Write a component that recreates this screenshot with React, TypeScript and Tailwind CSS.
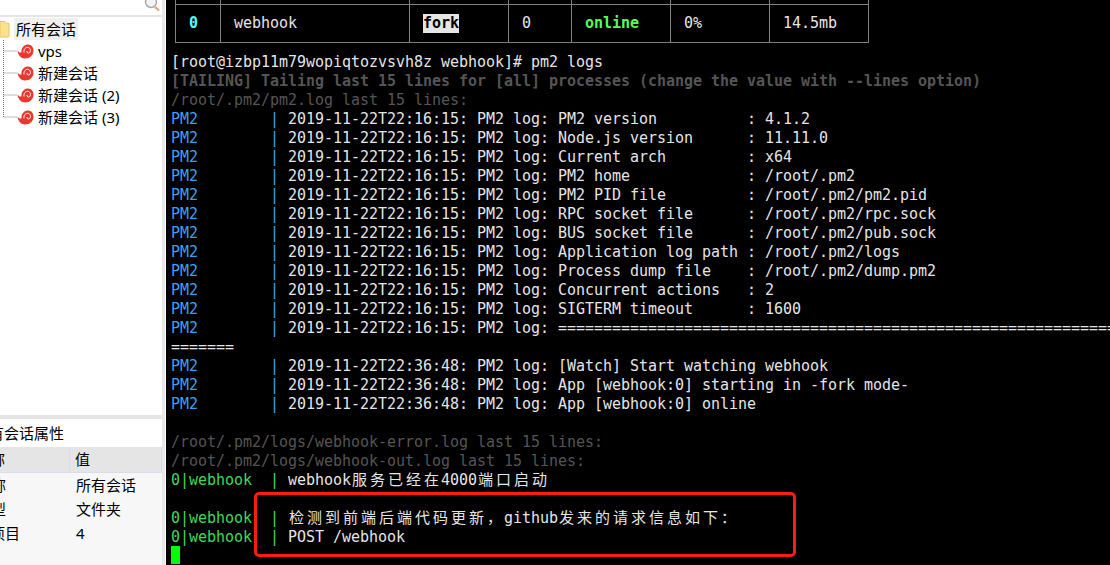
const cjk = '"Noto Sans","Noto Sans CJK SC",sans-serif';

function Spiral() {
  return (
    <svg width="17" height="15" viewBox="0 0 17 15" className="shrink-0">
      <path d="M0.5 6.5C2.5 9 4 9 4.5 8C4 3 8 0.5 11 0.5C14.5 0.5 16.5 3.5 16.5 6.5C16.5 11 13 14.5 8 14.5C4 14.5 1 11 0.5 6.5Z" fill="#e8392f" />
      <path d="M7 8.5C6.4 5 9 3 11 3.3C13.5 3.8 14.2 7 12.6 8.6C11.2 9.7 9.6 8.6 10 7" fill="none" stroke="#fff" strokeWidth="1" />
    </svg>
  );
}

function TreeRow({ label, last }: { label: string; last?: boolean }) {
  return (
    <div className="flex h-[22px] items-center">
      <svg width="17" height="22" viewBox="0 0 17 22" className="shrink-0">
        <path d={last ? "M3.5 0V11H17" : "M3.5 0V22M3.5 11H17"} fill="none" stroke="#777" strokeDasharray="1 1" />
      </svg>
      <Spiral />
      <span className="ml-[4px] text-[15px] text-black whitespace-pre">{label}</span>
    </div>
  );
}

function Sidebar() {
  return (
    <div className="flex h-full w-[166px] shrink-0 overflow-hidden bg-white" style={{ fontFamily: cjk }}>
      <div className="flex w-[162px] shrink-0 flex-col">
        <div className="flex h-[15px] justify-end overflow-hidden pr-[2px]">
          <svg width="16" height="15" viewBox="0 0 16 15" className="shrink-0">
            <circle cx="7" cy="2" r="5.5" fill="#f4f4f4" stroke="#a9a9a9" strokeWidth="1.5" />
            <path d="M11 7L15 10.5" stroke="#e0a070" strokeWidth="2" />
          </svg>
        </div>
        <div className="h-[2px] bg-[#e5e5e5]" />
        <div className="flex-1">
          <div className="flex h-[22px] items-center mt-[1px]">
            <svg width="14" height="17" viewBox="0 0 14 17" className="shrink-0">
              <path d="M0 0.5H5L7 2.5H9V16H0Z" fill="#fde08a" stroke="#e6c66a" />
            </svg>
            <span className="bg-[#f0f0f0] px-[2px] text-[15px] leading-[22px] text-black">所有会话</span>
          </div>
          <TreeRow label="vps" />
          <TreeRow label="新建会话" />
          <TreeRow label="新建会话 (2)" />
          <TreeRow label="新建会话 (3)" last />
        </div>
        <div className="h-[4px] bg-[#e5e5e5]" />
        <div className="flex h-[28px] items-center -ml-[26px] text-[15px] text-black whitespace-nowrap">所有会话属性</div>
        <div className="flex h-[26px] bg-[#e5e5e5] border-b border-r border-[#d9dee8] text-[15px] text-black">
          <div className="flex w-[70px] shrink-0 items-center justify-end border-r border-[#d9dee8] pr-[64px] whitespace-nowrap">名称</div>
          <div className="flex items-center pl-[5px]">值</div>
        </div>
        <div className="flex-none h-[92px] bg-[#f7f7f7] text-[15px] text-black">
          {[["名称", "所有会话"], ["类型", "文件夹"], ["包含项目", "4"]].map(([k, v]) => (
            <div key={k} className="flex h-[24px] items-center">
              <div className="flex w-[70px] shrink-0 justify-end whitespace-nowrap" style={{ paddingRight: k === "包含项目" ? 50 : 64 }}>{k}</div>
              <div className="pl-[6px]">{v}</div>
            </div>
          ))}
        </div>
      </div>
      <div className="w-[3px] shrink-0 bg-[#e8e8e8]" />
      <div className="w-[1px] shrink-0 bg-white" />
    </div>
  );
}

function Cell({ w, children, last }: { w: string; children?: React.ReactNode; last?: boolean }) {
  return (
    <div className={`flex shrink-0 items-center border-l border-[#808080] pl-[13px] ${w} ${last ? "border-r" : ""}`}>
      {children}
    </div>
  );
}

function Table() {
  const widths = ["w-[45px]", "w-[189px]", "w-[99px]", "w-[63px]", "w-[99px]", "w-[99px]", "w-[100px]"];
  return (
    <div className="ml-[9px] flex w-[694px] flex-col">
      <div className="flex h-[4px]">
        {widths.map((w, i) => <Cell key={i} w={w} last={i === 6} />)}
      </div>
      <div className="flex h-[39px] border-y border-[#808080] text-[#e5e5e5]">
        <Cell w="w-[45px]"><span className="font-bold text-[#5ff]">0</span></Cell>
        <Cell w="w-[189px]">webhook</Cell>
        <Cell w="w-[99px]"><span className="bg-[#e5e5e5] font-bold leading-[19px] text-black">fork</span></Cell>
        <Cell w="w-[63px]">0</Cell>
        <Cell w="w-[99px]"><span className="font-bold text-[#5f5]">online</span></Cell>
        <Cell w="w-[99px]">0%</Cell>
        <Cell w="w-[100px]" last>14.5mb</Cell>
      </div>
    </div>
  );
}

function Z({ t }: { t: string }) {
  return <span className="tracking-[3px] pl-[1px] -mr-[1px] text-[15px] leading-[0]" style={{ fontFamily: '"Noto Sans CJK SC",sans-serif' }}>{t}</span>;
}

function Pm2({ children }: { children: React.ReactNode }) {
  return (
    <div className="h-[19px] text-[#e5e5e5]">
      <span className="text-[#3aa0f5]">{"PM2        | "}</span>
      {"2019-11-22T22:"}
      {children}
    </div>
  );
}

const startup: [string, string][] = [
  ["PM2 version", "4.1.2"],
  ["Node.js version", "11.11.0"],
  ["Current arch", "x64"],
  ["PM2 home", "/root/.pm2"],
  ["PM2 PID file", "/root/.pm2/pm2.pid"],
  ["RPC socket file", "/root/.pm2/rpc.sock"],
  ["BUS socket file", "/root/.pm2/pub.sock"],
  ["Application log path", "/root/.pm2/logs"],
  ["Process dump file", "/root/.pm2/dump.pm2"],
  ["Concurrent actions", "2"],
  ["SIGTERM timeout", "1600"],
];

function Hook({ children }: { children: React.ReactNode }) {
  return (
    <div className="h-[19px] text-[#e5e5e5]">
      <span className="text-[#3fd85a]">{"0|webhook  | "}</span>
      {children}
    </div>
  );
}

function Terminal() {
  return (
    <div className="relative h-full flex-1 overflow-hidden bg-black text-[15px] leading-[19px] tracking-[-0.03px] whitespace-pre" style={{ fontFamily: '"DejaVu Sans Mono",monospace' }}>
      <Table />
      <div className="mt-[10px] pl-[5px]">
        <div className="h-[19px] text-[#e5e5e5]">[root@izbp11m79wopiqtozvsvh8z webhook]# pm2 logs</div>
        <div className="h-[19px] font-bold text-[#555]">[TAILING] Tailing last 15 lines for [all] processes (change the value with --lines option)</div>
        <div className="h-[19px] text-[#555]">/root/.pm2/pm2.log last 15 lines:</div>
        {startup.map(([k, v]) => (
          <Pm2 key={k}>{`16:15: PM2 log: ${k.padEnd(21)}: ${v}`}</Pm2>
        ))}
        <Pm2>{"16:15: PM2 log: ".concat("=".repeat(62))}</Pm2>
        <div className="h-[19px] text-[#e5e5e5]">=======</div>
        <Pm2>36:48: PM2 log: [Watch] Start watching webhook</Pm2>
        <Pm2>36:48: PM2 log: App [webhook:0] starting in -fork mode-</Pm2>
        <Pm2>36:48: PM2 log: App [webhook:0] online</Pm2>
        <div className="h-[19px]" />
        <div className="h-[19px] text-[#555]">/root/.pm2/logs/webhook-error.log last 15 lines:</div>
        <div className="h-[19px] text-[#555]">/root/.pm2/logs/webhook-out.log last 15 lines:</div>
        <Hook>webhook<Z t="服务已经在" />4000<Z t="端口启动" /></Hook>
        <div className="h-[19px]" />
        <Hook><Z t="检测到前端后端代码更新，" />github<Z t="发来的请求信息如下：" /></Hook>
        <Hook>POST /webhook</Hook>
        <div className="-mt-[1px] h-[18px] w-[9px] bg-[#0f0]" />
      </div>
      <div className="absolute left-[88px] top-[492px] h-[65px] w-[542px] rounded-[5px] border-[3px] border-[#fa1d12]" />
    </div>
  );
}

export default function App() {
  return (
    <div className="flex h-[565px] w-[1110px] overflow-hidden">
      <Sidebar />
      <Terminal />
    </div>
  );
}
